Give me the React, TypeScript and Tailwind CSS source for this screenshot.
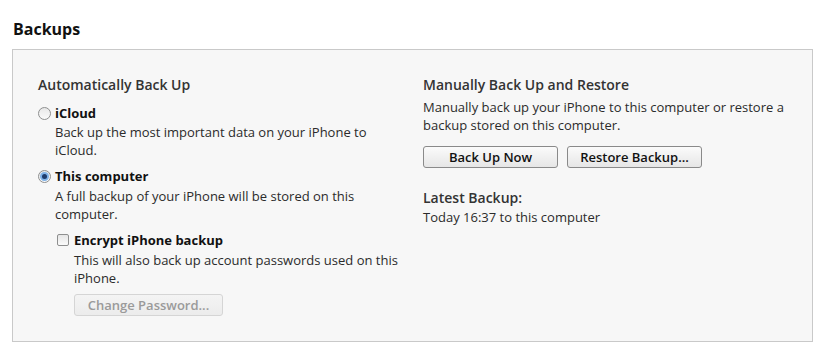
function Radio({ checked }: { checked?: boolean }) {
  return (
    <span className="mt-[3px] flex size-[13px] shrink-0 items-center justify-center rounded-full border border-[#8e8f8f] bg-gradient-to-b from-[#e8e8e8] to-[#fafafa]">
      {checked && <span className="size-[5px] rounded-full bg-[#1d3b6b] ring-2 ring-[#7fb2e8]" />}
    </span>
  );
}

function Button({ label, disabled, className }: { label: string; disabled?: boolean; className?: string }) {
  return (
    <div
      className={
        "flex h-[22px] items-center justify-center rounded-[3px] border bg-gradient-to-b text-[13px] font-semibold " +
        (disabled
          ? "border-[#d5d5d5] from-[#f4f4f4] to-[#ececec] text-[#9a9a9a] "
          : "border-[#8a8a8a] from-[#fbfbfb] to-[#e6e6e6] text-[#111] ") +
        (className ?? "")
      }
    >
      {label}
    </div>
  );
}

export default function App() {
  return (
    <div className="h-[345px] w-[818px] bg-white text-[13px] leading-[18px] text-[#2b2b2b] [font-family:'Open_Sans',sans-serif]">
      <div className="px-[13px] pt-[18px] text-[16px] font-bold leading-[22px] text-[#111]">Backups</div>
      <div className="mx-[12px] mt-[9px] flex h-[293px] w-[801px] border border-[#c9c9c9] bg-[#f7f7f7] pl-[25px] pt-[25px]">
        {/* Automatic */}
        <div className="w-[385px]">
          <div className="text-[14px] font-semibold leading-[20px] text-[#333]">Automatically Back Up</div>
          <div className="mt-[9px] flex gap-[4px]">
            <Radio />
            <div>
              <div className="font-bold text-[#111]">iCloud</div>
              <div className="mt-[1px] w-[320px]">Back up the most important data on your iPhone to iCloud.</div>
            </div>
          </div>
          <div className="mt-[8px] flex gap-[4px]">
            <Radio checked />
            <div>
              <div className="font-bold text-[#111]">This computer</div>
              <div className="mt-[2px] w-[300px]">A full backup of your iPhone will be stored on this computer.</div>
              <div className="ml-[2px] mt-[8px] flex gap-[5px]">
                <span className="mt-[3px] size-[12px] shrink-0 rounded-[2px] border border-[#8e8f8f] bg-gradient-to-b from-[#e6e6e6] to-[#fbfbfb]" />
                <div>
                  <div className="font-bold text-[#111]">Encrypt iPhone backup</div>
                  <div className="mt-[2px] w-[330px]">This will also back up account passwords used on this iPhone.</div>
                  <Button label="Change Password..." disabled className="mt-[7px] w-[149px]" />
                </div>
              </div>
            </div>
          </div>
        </div>
        {/* Manual */}
        <div className="w-[380px]">
          <div className="text-[14px] font-semibold leading-[20px] text-[#333]">Manually Back Up and Restore</div>
          <div className="mt-[3px]">Manually back up your iPhone to this computer or restore a backup stored on this computer.</div>
          <div className="mt-[12px] flex gap-[9px]">
            <Button label="Back Up Now" className="w-[135px]" />
            <Button label="Restore Backup..." className="w-[135px]" />
          </div>
          <div className="mt-[20px] text-[14px] font-semibold leading-[20px] text-[#333]">Latest Backup:</div>
          <div>Today 16:37 to this computer</div>
        </div>
      </div>
    </div>
  );
}
